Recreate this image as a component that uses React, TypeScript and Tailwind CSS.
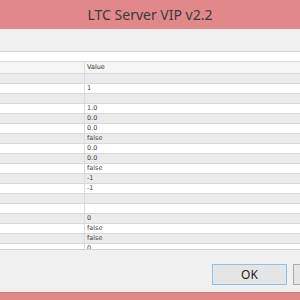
import React from "react";

const values = ["", "1", "", "1.0", "0.0", "0.0", "false", "0.0", "0.0", "false", "-1", "-1", "", "", "0", "false", "false", "0"];

export default function App() {
  return (
    <div className="w-[300px] h-[300px] flex flex-col overflow-hidden bg-white" style={{ fontFamily: "'DejaVu Sans', sans-serif" }}>
      <div className="h-[29px] shrink-0 bg-[#e0888a] flex items-center justify-center">
        <span className="text-[14px] text-[#3a3a3a] font-['Noto_Sans',sans-serif] leading-none">LTC Server VIP v2.2</span>
      </div>
      <div className="h-[23px] shrink-0 bg-[#f0f0f0] border-b border-[#d6d6d6]" />
      <div className="h-[9px] shrink-0 bg-white" />
      <div className="h-[189px] shrink-0 flex flex-col overflow-hidden border-b border-[#d2d2d2]">
        <div className="h-[13px] shrink-0 flex border-t border-b border-[#d8d8d8] bg-[#f5f5f5]">
          <div className="w-[85px] border-r border-[#dcdcdc]" />
          <div className="flex-1 pl-[2px] text-[6.5px] leading-[11px] text-[#333]">Value</div>
        </div>
        {values.map((v, i) => (
          <div
            key={i}
            className={
              "h-[10px] shrink-0 flex border-b border-[#d8d8d8] " +
              (i % 2 === 0 ? "bg-[#ebebeb]" : "bg-white")
            }
          >
            <div className="w-[85px] border-r border-[#dcdcdc]" />
            <div className="flex-1 pl-[2px] text-[6.5px] leading-[9px] text-[#444]">{v}</div>
          </div>
        ))}
      </div>
      <div className="h-[42px] shrink-0 bg-[#f0f0f0] flex items-start pt-[14px] pl-[212px] gap-[6px] overflow-hidden">
        <button className="w-[75px] h-[21px] shrink-0 bg-[#e5e5e5] border border-[#8fc0ec] text-[12px] text-[#222] flex items-center justify-center font-['Noto_Sans',sans-serif]">
          OK
        </button>
        <div className="w-[75px] h-[21px] shrink-0 bg-[#e5e5e5] border border-[#adadad]" />
      </div>
      <div className="flex-1 bg-[#e0888a] border-t border-[#cf7b7d]" />
    </div>
  );
}
